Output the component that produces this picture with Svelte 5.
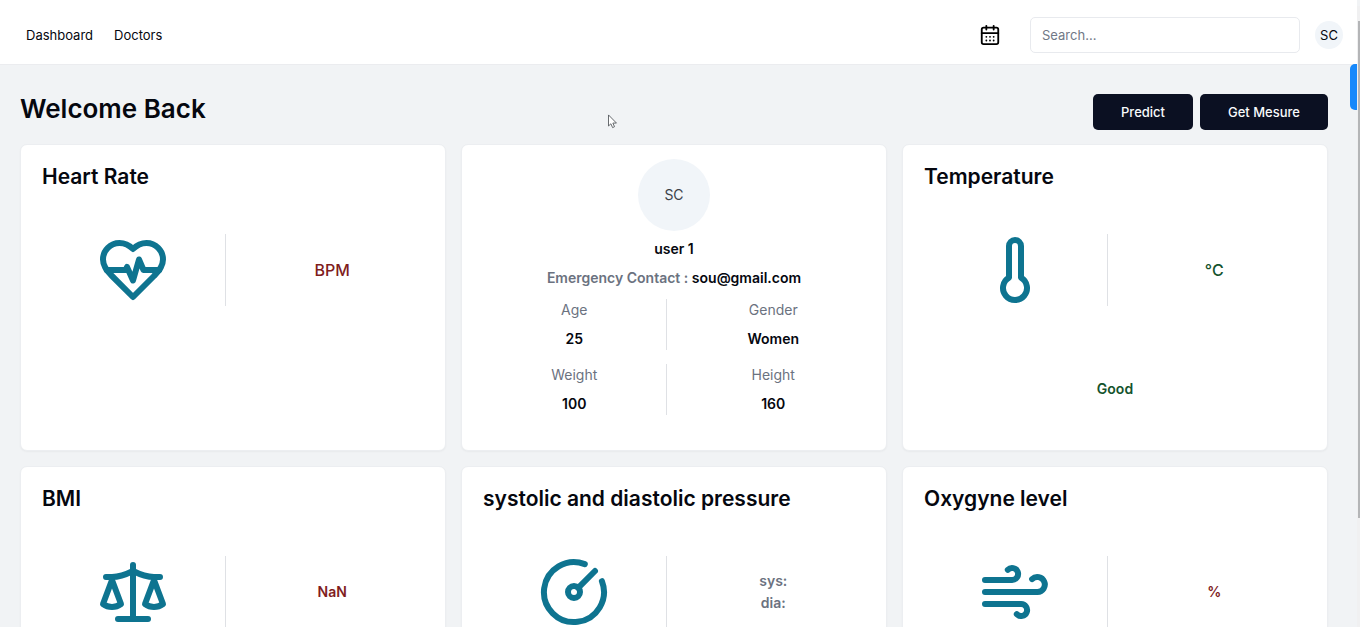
<script>
  const icons = {
    heart: [
      'M19 14c1.49-1.46 3-3.21 3-5.5A5.5 5.5 0 0 0 16.5 3c-1.76 0-3 .5-4.5 2-1.5-1.5-2.74-2-4.5-2A5.5 5.5 0 0 0 2 8.5c0 2.3 1.5 4.05 3 5.5l7 7Z',
      'M3.22 12H9.5l.5-1 2 4.5 2-7 1.5 3.5h5.27'
    ],
    thermometer: ['M14 4v10.54a4 4 0 1 1-4 0V4a2 2 0 0 1 4 0Z'],
    scale: [
      'm16 16 3-8 3 8c-.87.65-1.92 1-3 1s-2.13-.35-3-1Z',
      'm2 16 3-8 3 8c-.87.65-1.92 1-3 1s-2.13-.35-3-1Z',
      'M7 21h10',
      'M12 3v18',
      'M3 7h2c2 0 5-1 7-2 2 1 5 2 7 2h2'
    ],
    gauge: [
      'M15.6 2.7a10 10 0 1 0 5.7 5.7',
      'M14 12a2 2 0 1 1-4 0 2 2 0 0 1 4 0Z',
      'M13.4 10.6 19 5'
    ],
    wind: [
      'M17.7 7.7a2.5 2.5 0 1 1 1.8 4.3H2',
      'M9.6 4.6A2 2 0 1 1 11 8H2',
      'M12.6 19.4A2 2 0 1 0 14 16H2'
    ]
  };

  const facts = [
    [{ label: 'Age', value: '25' }, { label: 'Gender', value: 'Women' }],
    [{ label: 'Weight', value: '100' }, { label: 'Height', value: '160' }]
  ];
</script>

{#snippet metric(title, icon, lines, tone, status)}
  <section class="card metric">
    <h2>{title}</h2>
    <div class="halves reading">
      <div class="half ruled">
        <svg class="glyph" viewBox="0 0 24 24" aria-hidden="true">
          {#each icons[icon] as d}<path {d} />{/each}
        </svg>
      </div>
      <div class="half value {tone}">
        {#each lines as line}<span>{line}</span>{/each}
      </div>
    </div>
    {#if status}<p class="status">{status}</p>{/if}
  </section>
{/snippet}

<div class="shell">
  <div class="page">
    <header>
      <nav>
        <a href="#dashboard">Dashboard</a>
        <a href="#doctors">Doctors</a>
      </nav>
      <div class="tools">
        <button class="calendar" aria-label="Calendar">
          <svg viewBox="0 0 24 24" aria-hidden="true">
            <rect width="18" height="18" x="3" y="4" rx="2" />
            <path d="M16 2v4M8 2v4M3 10h18M8 14h.01M12 14h.01M16 14h.01M8 18h.01M12 18h.01M16 18h.01" />
          </svg>
        </button>
        <input type="search" placeholder="Search..." aria-label="Search" />
        <button class="avatar small">SC</button>
      </div>
    </header>

    <main>
      <div class="heading">
        <h1>Welcome Back</h1>
        <div class="actions">
          <button>Predict</button>
          <button>Get Mesure</button>
        </div>
      </div>

      <div class="cards">
        {@render metric('Heart Rate', 'heart', ['BPM'], 'red unit')}
        <section class="card profile">
          <div class="avatar large">SC</div>
          <p class="strong">user 1</p>
          <p class="contact">Emergency Contact : <span class="strong">sou@gmail.com</span></p>
          <div class="facts">
            {#each facts as row}
              <div class="halves">
                {#each row as fact, i}
                  <dl class:ruled={i === 0}>
                    <dt>{fact.label}</dt>
                    <dd>{fact.value}</dd>
                  </dl>
                {/each}
              </div>
            {/each}
          </div>
        </section>
        {@render metric('Temperature', 'thermometer', ['°C'], 'green unit', 'Good')}
        {@render metric('BMI', 'scale', ['NaN'], 'red')}
        {@render metric('systolic and diastolic pressure', 'gauge', ['sys:', 'dia:'], 'gray')}
        {@render metric('Oxygyne level', 'wind', ['%'], 'red')}
      </div>
    </main>
    <div class="tab"></div>
  </div>
  <div class="rail"><div class="thumb"></div></div>
  <svg class="pointer" viewBox="0 0 12 18" aria-hidden="true">
    <path d="M1.5 1.5v12l2.7-2.5 1.9 4.3 2.2-1-1.9-4.1h3.6Z" />
  </svg>
</div>

<style>
  :global(body) {
    background: #f1f3f5;
  }

  .shell {
    position: relative;
    display: flex;
    height: 100vh;
    overflow: hidden;
    color: #05070f;
    font: 14px/22px Inter, sans-serif;
    box-sizing: border-box;
  }

  .shell :is(h1, h2, p, dl, dd) {
    margin: 0;
  }

  .page {
    position: relative;
    flex: 1;
    min-width: 0;
    overflow-y: auto;
    scrollbar-width: none;
  }

  header {
    display: flex;
    align-items: center;
    justify-content: space-between;
    padding: 17px 14px 11px 26px;
    background: #fff;
    border-bottom: 1px solid #ebecef;
  }

  nav {
    display: flex;
    gap: 21px;
    font-size: 13px;
  }

  a {
    color: inherit;
    text-decoration: none;
  }

  button {
    border: 0;
    font: inherit;
    cursor: pointer;
  }

  .tools {
    display: flex;
    align-items: center;
  }

  .calendar {
    display: flex;
    margin-right: 29px;
    padding: 0;
    background: none;
  }

  svg {
    fill: none;
    stroke: currentColor;
    stroke-width: 2;
    stroke-linecap: round;
    stroke-linejoin: round;
  }

  .calendar svg {
    width: 22px;
    height: 22px;
  }

  input {
    box-sizing: border-box;
    width: 270px;
    height: 36px;
    margin-right: 15px;
    padding: 0 11px;
    border: 1px solid #e8eaee;
    border-radius: 5px;
    font: 13px/18px Inter, sans-serif;
    outline: none;
    appearance: none;
  }

  input::placeholder {
    color: #717886;
  }

  .avatar {
    display: grid;
    place-items: center;
    padding: 0;
    border-radius: 50%;
    background: #f1f5f9;
    color: #05070f;
  }

  .small {
    width: 28px;
    height: 28px;
    font-size: 13px;
  }

  .large {
    width: 72px;
    height: 72px;
    color: #3c4149;
  }

  main {
    padding: 29px 29px 15px 20px;
  }

  .heading {
    display: flex;
    justify-content: space-between;
    margin-bottom: 14px;
  }

  h1 {
    font-size: 26px;
    font-weight: 600;
    line-height: 30px;
  }

  .actions {
    display: flex;
    gap: 7px;
  }

  .actions button {
    height: 36px;
    padding: 0 28px;
    border-radius: 5px;
    background: #0b1022;
    color: #f8fafc;
    font-size: 13px;
    font-weight: 500;
  }

  .cards {
    display: grid;
    grid-template-columns: repeat(3, minmax(0, 1fr));
    grid-auto-rows: minmax(307px, auto);
    gap: 15px;
  }

  .card {
    box-sizing: border-box;
    padding: 21px;
    border: 1px solid #eceef1;
    border-radius: 7px;
    background: #fff;
    box-shadow: 0 1px 2px rgb(0 0 0 / 4%);
  }

  h2 {
    font-size: 21px;
    font-weight: 600;
    line-height: 22px;
  }

  .metric {
    display: flex;
    flex-direction: column;
    gap: 46px;
  }

  .halves {
    display: grid;
    grid-template-columns: 1fr 1fr;
    gap: 15px;
  }

  .ruled {
    border-right: 1px solid #dfe1e5;
  }

  .half {
    display: flex;
    flex-direction: column;
    align-items: center;
    justify-content: center;
    min-height: 72px;
  }

  .glyph {
    width: 72px;
    height: 72px;
    color: #0e7490;
  }

  .value {
    font-weight: 600;
  }

  .unit {
    font-size: 16px;
    font-weight: 500;
  }

  .red {
    color: #7f1d1d;
  }

  .green,
  .status {
    color: #14532d;
  }

  .gray {
    color: #6b7280;
  }

  .status {
    padding-top: 26px;
    font-weight: 600;
    text-align: center;
  }

  .profile {
    display: flex;
    flex-direction: column;
    align-items: center;
    gap: 7px;
    padding-top: 14px;
    text-align: center;
  }

  .strong,
  dd {
    color: #05070f;
    font-weight: 600;
  }

  .contact {
    color: #6b7280;
    font-weight: 600;
  }

  .facts {
    display: grid;
    align-self: stretch;
    gap: 14px;
    margin-top: 3px;
  }

  dl {
    display: grid;
    gap: 7px;
  }

  dt {
    color: #6b7280;
  }

  .tab {
    position: absolute;
    top: 64px;
    right: 0;
    width: 7px;
    height: 46px;
    border-radius: 5px 0 0 5px;
    background: #1688fb;
  }

  .rail {
    box-sizing: border-box;
    width: 3px;
    margin-top: 6px;
    padding: 15px 0 0 1px;
    background: #f0f0f1;
  }

  .thumb {
    height: 82%;
    background: #b4b5b7;
  }

  .pointer {
    position: absolute;
    top: 114px;
    left: 607px;
    width: 11px;
    height: 16px;
    fill: #fff;
    stroke: #55585d;
    stroke-width: 1;
  }
</style>
